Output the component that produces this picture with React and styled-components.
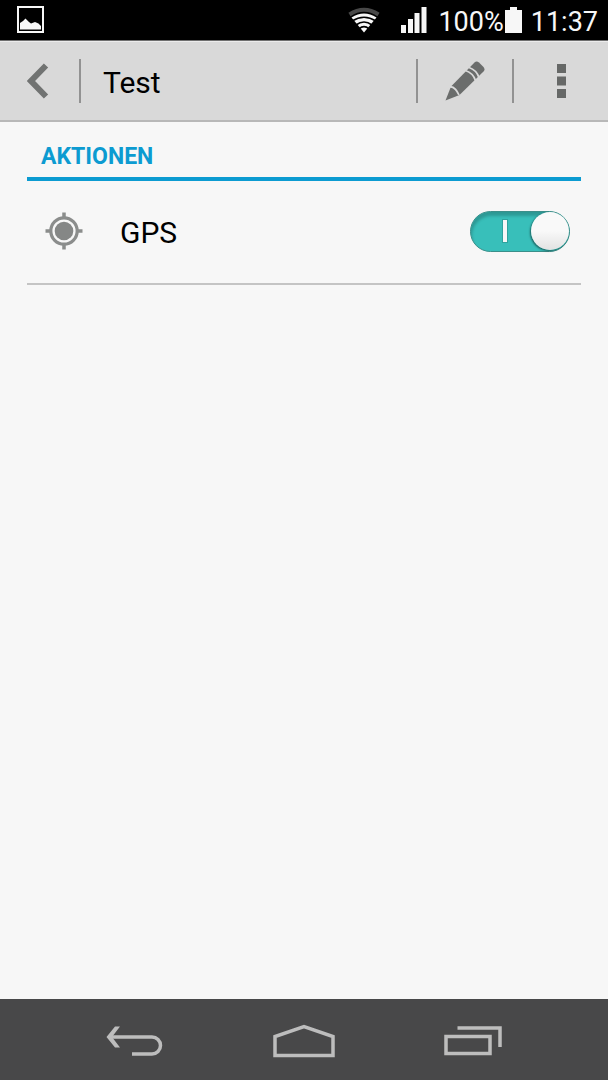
import React, { useState } from 'react';
import styled, { createGlobalStyle } from 'styled-components';

const GlobalStyle = createGlobalStyle`
  * {
    box-sizing: border-box;
  }
  body {
    margin: 0;
    background-color: #f7f7f7;
    color: #000000;
    font-family: Roboto, 'Noto Sans', sans-serif;
  }
`;

const PictureIcon = () => (
  <svg width="28" height="28" viewBox="0 0 28 28" aria-hidden="true">
    <rect x="1" y="1" width="25" height="25" fill="none" stroke="#f7f7f7" strokeWidth="2" />
    <path d="M3 23.500V17l3-2 2.500-2.500L12 16l2 1.500 4-1.500 3.500 1.500 2.500 2.500v3.500z" fill="#f7f7f7" />
  </svg>
);

const WifiIcon = () => (
  <svg width="32" height="26" viewBox="0 0 32 26" fill="none" aria-hidden="true">
    <path d="M1.500 7.500Q16-2 30.500 7.500" stroke="#484848" strokeWidth="4" />
    <path d="M3.500 10.500Q16 2.500 28.500 10.500L16 25.500z" fill="#f7f7f7" />
    <path
      d="M4 14Q16 6.500 28 14M8 18Q16 12 24 18M11 21.800Q16 17.500 21 21.800"
      stroke="#000000"
      strokeWidth="1.600"
    />
  </svg>
);

const SignalIcon = () => (
  <svg width="26" height="26" viewBox="0 0 26 26" fill="#f7f7f7" aria-hidden="true">
    <path d="M0 18h5v8H0zM7 12h5v14H7zM13.500 6h5v20h-5zM20.500 0h5v26h-5z" />
  </svg>
);

const BatteryIcon = () => (
  <svg width="17" height="26" viewBox="0 0 17 26" fill="#f7f7f7" aria-hidden="true">
    <path d="M5 0h7v3h5v23H0V3h5z" />
  </svg>
);

const BackIcon = () => (
  <svg width="22" height="36" viewBox="0 0 22 36" fill="none" aria-hidden="true">
    <path d="M19 2.500L4 18l15 15.500" stroke="#717372" strokeWidth="6" />
  </svg>
);

const PencilIcon = () => (
  <svg width="40" height="40" viewBox="0 0 40 40" aria-hidden="true">
    <path
      d="M0.500 39.500L6 25.500 29.500 1.500q2-1.800 4.500 0l4.500 4.500q2 2.500 0 4.500L14.500 34z"
      fill="#6b6d6c"
    />
    <path
      d="M4.500 25.500q4 0.500 6 2.800t3.500 5.700M20.500 9.500q7.500 2.500 10 10M24 6.500q7.500 2.500 10 10"
      fill="none"
      stroke="#d9d9d9"
      strokeWidth="1.800"
    />
  </svg>
);

const MoreIcon = () => (
  <svg width="9" height="34" viewBox="0 0 9 34" fill="#666867" aria-hidden="true">
    <path d="M0 0h9v9H0zM0 12.500h9v9H0zM0 25h9v9H0z" />
  </svg>
);

const LocationIcon = () => (
  <svg width="38" height="38" viewBox="0 0 38 38" aria-hidden="true">
    <circle cx="19" cy="19" r="13.200" fill="none" stroke="#8b8d8c" strokeWidth="3.200" />
    <circle cx="19" cy="19" r="9.300" fill="#858786" />
    <path d="M19 0.500v5M19 32.500v5M0.500 19h5M32.500 19h5" stroke="#8b8d8c" strokeWidth="3.500" />
  </svg>
);

const NavBackIcon = () => (
  <svg width="58" height="32" viewBox="0 0 58 32" fill="none" stroke="#bdbdbd" strokeWidth="3.500" aria-hidden="true">
    <path d="M4 12H46a8.500 8.500 0 0 1 0 17H26" />
    <path d="M9 1.500h5L6 12l8 10.500H9L0.500 12z" fill="#bdbdbd" stroke="none" />
  </svg>
);

const NavHomeIcon = () => (
  <svg width="62" height="34" viewBox="0 0 62 34" fill="none" stroke="#bdbdbd" strokeWidth="3.500" aria-hidden="true">
    <path d="M2 31.500V12.500L31 2.500l29 10v19z" />
  </svg>
);

const NavRecentsIcon = () => (
  <svg width="58" height="30" viewBox="0 0 58 30" fill="none" stroke="#bdbdbd" strokeWidth="3.500" aria-hidden="true">
    <path d="M2 10.500h44v17H2z" />
    <path d="M13.500 2H56v19" />
  </svg>
);

const App = () => {
  const [gpsOn, setGpsOn] = useState(true);

  return (
    <>
      <GlobalStyle />
      <Screen>
        <StatusBar>
          <PictureIcon />
          <StatusGroup>
            <WifiIcon />
            <SignalSlot>
              <SignalIcon />
            </SignalSlot>
            <BatteryLevel>
              <StatusText>100%</StatusText>
              <BatteryIcon />
            </BatteryLevel>
            <StatusText>11:37</StatusText>
          </StatusGroup>
        </StatusBar>

        <ActionBar>
          <BackButton type="button" aria-label="Zurück">
            <BackIcon />
          </BackButton>
          <Divider />
          <Title>Test</Title>
          <Divider />
          <BarButton type="button" aria-label="Bearbeiten">
            <PencilIcon />
          </BarButton>
          <Divider />
          <BarButton type="button" aria-label="Weitere Optionen">
            <MoreIcon />
          </BarButton>
        </ActionBar>

        <Content>
          <SectionTitle>AKTIONEN</SectionTitle>
          <Row>
            <LocationIcon />
            <RowLabel htmlFor="gps">GPS</RowLabel>
            <Switch
              id="gps"
              type="checkbox"
              role="switch"
              checked={gpsOn}
              onChange={e => setGpsOn(e.target.checked)}
            />
          </Row>
        </Content>

        <NavBar>
          <NavButton type="button" aria-label="Zurück">
            <NavBackIcon />
          </NavButton>
          <NavButton type="button" aria-label="Startseite">
            <NavHomeIcon />
          </NavButton>
          <NavButton type="button" aria-label="Letzte Apps">
            <NavRecentsIcon />
          </NavButton>
        </NavBar>
      </Screen>
    </>
  );
};

const Screen = styled.div`
  min-height: 100vh;
  display: flex;
  flex-direction: column;
`;

const StatusBar = styled.div`
  height: 40px;
  padding: 0 10px 0 17px;
  display: flex;
  align-items: center;
  justify-content: space-between;
  background-color: #000000;
  color: #f7f7f7;
`;

const StatusGroup = styled.div`
  display: flex;
  align-items: center;
  gap: 9px;
`;

const StatusText = styled.span`
  padding-top: 4px;
  font-size: 27px;
  line-height: 36px;
`;

const SignalSlot = styled.span`
  display: flex;
  padding: 0 2px 0 12px;
`;

const BatteryLevel = styled.span`
  display: flex;
  align-items: center;
  gap: 1px;
`;

const ActionBar = styled.header`
  height: 82px;
  display: flex;
  align-items: center;
  background-color: #d9d9d9;
  border-top: 1px solid #6f6f6f;
  border-bottom: 2px solid #b8b8b8;
  box-shadow: inset 0 1px 0 #ececec;
`;

const BarButton = styled.button`
  width: 94px;
  height: 100%;
  padding: 0;
  display: flex;
  align-items: center;
  justify-content: center;
  border: none;
  background: none;
  cursor: pointer;
`;

const BackButton = styled(BarButton)`
  width: 79px;
  padding-right: 4px;
`;

const Divider = styled.span`
  width: 2px;
  height: 44px;
  background-color: #929292;
`;

const Title = styled.h1`
  flex: 1;
  margin: 0;
  padding: 4px 0 0 22px;
  font-size: 30px;
  font-weight: 400;
  line-height: 40px;
`;

const Content = styled.main`
  flex: 1;
  padding: 0 27px;
`;

const SectionTitle = styled.h2`
  margin: 0;
  padding: 15px 14px 0;
  border-bottom: 4px solid #0c9bd1;
  color: #0c9bd1;
  font-size: 23px;
  font-weight: 700;
  line-height: 40px;
`;

const Row = styled.div`
  height: 104px;
  padding: 0 11px 2px 18px;
  display: flex;
  align-items: center;
  border-bottom: 2px solid #c4c4c4;
`;

const RowLabel = styled.label`
  flex: 1;
  padding: 4px 0 0 37px;
  font-size: 30px;
  line-height: 40px;
`;

const Switch = styled.input`
  appearance: none;
  width: 100px;
  height: 41px;
  margin: 0;
  display: flex;
  align-items: center;
  justify-content: ${props => (props.checked ? 'space-between' : 'flex-start')};
  border: 1px solid ${props => (props.checked ? '#3b8f8a' : '#8f8f8f')};
  border-radius: 21px;
  background-color: ${props => (props.checked ? '#38bfba' : '#c4c4c4')};
  box-shadow: inset 1px 4px 3px rgba(0, 0, 0, 0.2);
  cursor: pointer;

  &::before {
    content: '';
    width: 4px;
    height: 22px;
    margin-left: 32px;
    display: ${props => (props.checked ? 'block' : 'none')};
    background-color: #f7f7f7;
    box-shadow: 0 0 0 1px #2fa39e;
  }

  &::after {
    content: '';
    width: 38px;
    height: 38px;
    border-radius: 50%;
    background: linear-gradient(#f9f9f9 50%, #e2e2e2);
    box-shadow: -1px 1px 2px rgba(0, 0, 0, 0.5);
  }
`;

const NavBar = styled.nav`
  height: 81px;
  padding: 0 50px;
  display: flex;
  background-color: #484849;
`;

const NavButton = styled.button`
  flex: 1;
  padding: 3px 0 0;
  display: flex;
  align-items: center;
  justify-content: center;
  border: none;
  background: none;
  cursor: pointer;
`;

export default App;
